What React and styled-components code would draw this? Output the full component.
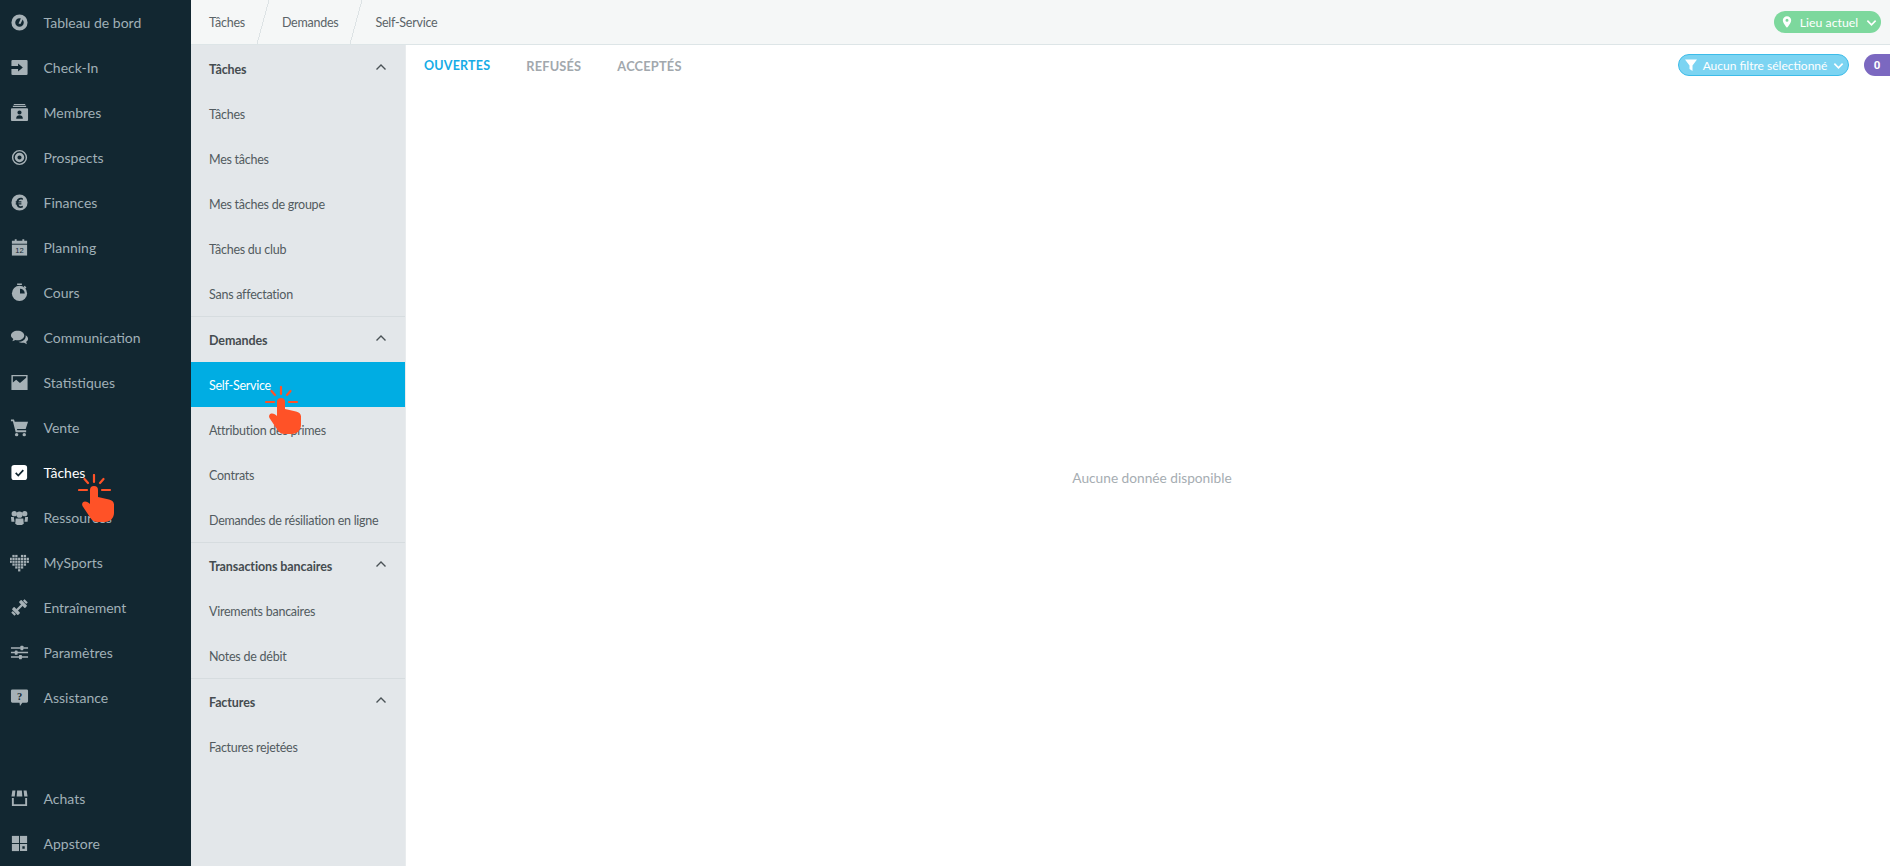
import React from 'react';
import styled, { createGlobalStyle } from 'styled-components';

const Global = createGlobalStyle`
  html, body { margin: 0; padding: 0; height: 100%; background: #fff; overflow: hidden; }
  #root { height: 100%; }
  * { box-sizing: border-box; }
`;

const Page = styled.div`
  display: flex; width: 1890px; height: 866px; position: relative; overflow: hidden;
  font-family: Lato, "Noto Sans", sans-serif; font-size: 14px;
`;
const Nav = styled.nav`
  width: 191px; flex: none; background: #122731; display: flex; flex-direction: column;
`;
const NavSpacer = styled.div`flex: 1;`;
const NavItem = styled.div`
  height: 45px; flex: none; display: flex; align-items: center; gap: 14.500px; padding-left: 10px;
  color: ${p => (p.$active ? '#ffffff' : '#a0b0b7')}; font-size: 14px;
  svg { width: 19px; height: 19px; flex: none; }
`;
const Main = styled.div`flex: 1; display: flex; flex-direction: column; min-width: 0;`;
const TopBar = styled.header`
  height: 45px; flex: none; background: #f5f7f7; border-bottom: 1px solid #dde5e7;
  display: flex; align-items: center; justify-content: space-between; padding: 0 9px 0 0;
`;
const Crumbs = styled.div`display: flex; align-items: center; height: 100%;`;
const Crumb = styled.div`
  height: 100%; display: flex; align-items: center; padding: 0 18px 0 19px; color: #5b6468; font-size: 12.500px; letter-spacing: -.25px;
  position: relative;
  &:first-child { padding-left: 18px; }
  &:not(:last-child)::after {
    content: ''; position: absolute; right: -6px; top: 0; bottom: 0; width: 12px;
    background: linear-gradient(to bottom right, transparent calc(50% - .5px), #dde3e5 calc(50% - .5px), #dde3e5 calc(50% + .5px), transparent calc(50% + .5px));
  }
`;
const LocationPill = styled.div`
  height: 22px; width: 107px; border-radius: 11px; background: #7dd89d; color: #fff; font-size: 12.300px;
  display: flex; align-items: center; justify-content: center; gap: 8px; padding-left: 4px;
`;
const Body = styled.div`flex: 1; display: flex; min-height: 0;`;
const Side = styled.aside`
  width: 215px; flex: none; background: #e3e7ea; border-right: 1px solid #e9ecee; display: flex; flex-direction: column;
  padding-top: 1px;
`;
const Section = styled.section`
  border-bottom: ${p => (p.$last ? 'none' : '1px solid #d6dcdf')};
`;
const SectionHead = styled.div`
  height: 45px; display: flex; align-items: center; justify-content: space-between; padding: 1px 18px 0 18px;
  color: #454c50; font-size: 12.500px; font-weight: 700; letter-spacing: -.1px;
  svg { width: 12px; height: 12px; margin-top: -4px; }
`;
const SideItem = styled.div`
  height: 45px; display: flex; align-items: center; padding: 1px 0 0 18px; font-size: 12.500px; letter-spacing: -.25px;
  color: ${p => (p.$active ? '#ffffff' : '#525b60')};
  background: ${p => (p.$active ? '#00ade3' : 'transparent')};
`;
const Content = styled.main`flex: 1; display: flex; flex-direction: column; min-width: 0;`;
const TabRow = styled.div`
  height: 42px; flex: none; display: flex; align-items: center; justify-content: space-between; padding: 0 0 0 18px;
`;
const Tabs = styled.div`display: flex; gap: 36px;`;
const Tab = styled.div`
  font-size: ${p => (p.$active ? '12.500px' : '12.800px')}; font-weight: 700; letter-spacing: .2px; color: ${p => (p.$active ? '#16ace6' : '#a2a8ad')};
`;
const Filters = styled.div`display: flex; align-items: center; gap: 15px; padding-bottom: 2px;`;
const FilterPill = styled.div`
  height: 22px; width: 171px; border-radius: 11px; background: #7cd4f2; border: 1px solid #3dbce9; color: #fff; font-size: 12px;
  display: flex; align-items: center; justify-content: center; gap: 6px; padding-left: 2px;
`;
const CountBadge = styled.div`
  width: 26px; height: 22px; border-radius: 11px 0 0 11px; background: #7b68c0; color: #fff; font-size: 11.500px; font-weight: 700;
  font-family: Roboto, sans-serif; display: flex; align-items: center; justify-content: center;
`;
const Empty = styled.div`
  flex: 1; display: flex; align-items: center; justify-content: center; color: #a6adb2; font-size: 13.700px; padding: 2px 0 0 8px;
`;
const HandWrap = styled.div`
  position: absolute; left: ${p => p.$x}px; top: ${p => p.$y}px; width: 40px; height: 50px;
`;

const ic = '#a6b1b6';
const bg = '#122731';
const Svg = ({ children, ...r }) => <svg viewBox="0 0 20 20" fill={ic} {...r}>{children}</svg>;

const icons = {
  dash: <Svg><path fillRule="evenodd" d="M10 1.500a8.500 8.500 0 100 17 8.500 8.500 0 000-17zm0 4a4.500 4.500 0 100 9 4.500 4.500 0 000-9z"/><path d="M9 11l3-6.500 2 1-3 6z"/></Svg>,
  checkin: <Svg><rect x="1.500" y="2" width="17" height="16" rx="1.200"/><path fill={bg} d="M1 8.500h7.500V5.800l5 4.200-5 4.200v-2.700H1z"/></Svg>,
  members: <Svg><path d="M4 1h12v1H4zM3 3h14v1.200H3z"/><path fillRule="evenodd" d="M2 5.500h16a1 1 0 011 1V18a1 1 0 01-1 1H2a1 1 0 01-1-1V6.500a1 1 0 011-1zM10 7.800a2.200 2.200 0 100 4.400 2.200 2.200 0 000-4.400zm-3.500 8.700h7c0-2.500-1.500-3.500-3.500-3.500s-3.500 1-3.500 3.500z"/></Svg>,
  prospects: <Svg><path fillRule="evenodd" d="M10 2a8 8 0 100 16 8 8 0 000-16zm0 1.500a6.500 6.500 0 110 13 6.500 6.500 0 010-13z"/><path fillRule="evenodd" d="M10 5a5 5 0 100 10 5 5 0 000-10zm0 2.800a2.200 2.200 0 110 4.400 2.200 2.200 0 010-4.400z"/></Svg>,
  finances: <Svg><path fillRule="evenodd" d="M10 1.500a8.500 8.500 0 100 17 8.500 8.500 0 000-17zM13.500 5.500v1.800c-2-1-4-.5-4.500 1.500h3v1.200H8.800v.8H12V12H9c.6 2 2.500 2.500 4.500 1.500v1.800c-3 1.200-6 0-6.700-3.300H6v-1.200h.6v-.8H6V8.800h.8C7.500 5.500 10.500 4.300 13.500 5.500z"/></Svg>,
  planning: <Svg><path d="M2 3h3V1.200h2V3h6V1.200h2V3h3v3H2z"/><rect x="2" y="7" width="16" height="11.500"/><text x="10" y="16.300" fontSize="8" textAnchor="middle" fill={bg} fontFamily="Liberation Sans">12</text></Svg>,
  cours: <Svg><path d="M7.500.5h5V2h-5zM15.500 3l1.800 1.800-1.200 1.200-1.800-1.800z"/><circle cx="10" cy="11" r="8"/><path fill={bg} d="M10.500 6v5H15.500a5 5 0 00-5-5z"/></Svg>,
  comm: <Svg><path d="M8 3c4 0 7 2.200 7 5s-3 5-7 5c-.8 0-1.500-.1-2.200-.3L2.500 14l1-2.500C2 10.500 1 9.300 1 8c0-2.800 3-5 7-5z"/><path d="M16.500 7.500c1.500.9 2.500 2.200 2.500 3.700 0 1.300-.8 2.500-2 3.300l.8 2.500-3-1.500c-2 .4-4.500 0-5.800-1 3.700 0 8-2 7.500-7z"/></Svg>,
  stats: <Svg><path fillRule="evenodd" d="M1.500 2h17v16h-17zM3 3.500V10l3.500-3 4 3.500 6.500-5.500V3.500z"/></Svg>,
  cart: <Svg><path d="M1 1.500h3.200l.8 2.500H19l-2.500 7.500H7.300l.4 1.500H17v2H6L3 3.500H1z"/><circle cx="7" cy="17.500" r="1.800"/><circle cx="15" cy="17.500" r="1.800"/></Svg>,
  tasks: <svg viewBox="0 0 20 20"><rect x="1.500" y="2" width="16.500" height="16" rx="3" fill="#fff"/><path d="M6 10.500l2.700 2.700L14 7.500" fill="none" stroke={bg} strokeWidth="1.800"/></svg>,
  res: <Svg><circle cx="4.500" cy="6" r="2.800"/><circle cx="15.500" cy="6" r="2.800"/><circle cx="10" cy="7" r="3.300"/><path d="M1 9.500h3l.8 5H1.500zM19 9.500h-3l-.8 5h3.300zM6 11h8l.5 5.500-2 1.500h-5l-2-1.500z"/></Svg>,
  mysports: <Svg><g>{[[3,3],[6,3],[12,3],[15,3],[0,6],[3,6],[6,6],[9,6],[12,6],[15,6],[18,6],[0,9],[3,9],[6,9],[9,9],[12,9],[15,9],[18,9],[3,12],[6,12],[9,12],[12,12],[15,12],[6,15],[9,15],[12,15],[9,18]].map(([x, y], i) => <rect key={i} x={x - .5} y={y - 1} width="2.400" height="2.400"/>)}</g></Svg>,
  gym: <Svg><g transform="rotate(-45 10 10)"><rect x="5.500" y="8.800" width="9" height="2.400"/><rect x="3" y="5.500" width="3.500" height="9" rx=".8"/><rect x="13.500" y="5.500" width="3.500" height="9" rx=".8"/><rect x="0" y="7.500" width="2.500" height="5" rx=".8"/><rect x="17.500" y="7.500" width="2.500" height="5" rx=".8"/></g></Svg>,
  params: <Svg><path d="M1 4.500h18v1.500H1zM1 9.300h18v1.500H1zM1 14h18v1.500H1z"/><rect x="11" y="3" width="3" height="4.500" rx=".5"/><rect x="5" y="7.800" width="3" height="4.500" rx=".5"/><rect x="9.500" y="12.500" width="3" height="4.500" rx=".5"/></Svg>,
  help: <Svg><path d="M2.500 1.500h15A1.500 1.500 0 0119 3v11a1.500 1.500 0 01-1.500 1.500H13L10.500 19l-.5-3.500H2.500A1.500 1.500 0 011 14V3a1.500 1.500 0 011.500-1.500z"/><text x="10" y="12.500" fontSize="11" textAnchor="middle" fill={bg} fontFamily="Liberation Serif" fontWeight="700">?</text></Svg>,
  shop: <Svg><path d="M2.500 1.500h3.200L5 8H1.500zM7.500 1.500h5L13 8H7zM14.300 1.500h3.200l1 6.500H15z"/><path d="M2 9.500h2v6.500h12V9.500h2V18H2z"/></Svg>,
  apps: <Svg><rect x="2" y="2" width="7.500" height="7.500"/><rect x="10.500" y="2" width="7.500" height="7.500"/><rect x="2" y="10.500" width="7.500" height="7.500"/><path fillRule="evenodd" d="M10.500 10.500H18V18h-7.500zm2.500 2.500v2.500h2.500V13z"/></Svg>,
};

const Chevron = ({ color = '#4a5256', size = 12 }) => (
  <svg viewBox="0 0 12 12" width={size} height={size} fill="none" stroke={color} strokeWidth="1.400"><path d="M1.500 8.500L6 4l4.500 4.500"/></svg>
);
const ChevronDown = () => (
  <svg viewBox="0 0 12 12" width="11" height="11" fill="none" stroke="#fff" strokeWidth="1.800"><path d="M1.500 4L6 8.500 10.500 4"/></svg>
);
const Pin = () => (
  <svg viewBox="0 0 12 14" width="10" height="12" fill="#fff"><path fillRule="evenodd" d="M6 0a5 5 0 00-5 5c0 3.500 5 9 5 9s5-5.500 5-9a5 5 0 00-5-5zm0 3.200a1.800 1.800 0 110 3.600 1.800 1.800 0 010-3.600z"/></svg>
);
const Funnel = () => (
  <svg viewBox="0 0 12 12" width="12" height="12" fill="#fff"><path d="M0 .5h12L7.500 6.500V12l-3-2V6.500z"/></svg>
);
const Hand = () => (
  <svg viewBox="0 0 40 50" width="40" height="50">
    <g stroke="#ff5227" strokeWidth="2.200" strokeLinecap="round">
      <path d="M16 1v7M6.500 5l3.500 4M25.500 5L22 9M1 16h8M24 16h8"/>
    </g>
    <path fill="#ff5227" d="M12 16a4 4 0 018 0v7l11 2.500c3 .7 5 2.500 5 5V39c0 5-4 9-9 9h-7c-3.500 0-6-1.500-7.500-4L4.500 32c-1.200-2.500.5-4.500 2.500-4.500 2 0 3.500 1 5 2.500z"/>
  </svg>
);

const top = [
  ['dash', 'Tableau de bord'], ['checkin', 'Check-In'], ['members', 'Membres'], ['prospects', 'Prospects'],
  ['finances', 'Finances'], ['planning', 'Planning'], ['cours', 'Cours'], ['comm', 'Communication'],
  ['stats', 'Statistiques'], ['cart', 'Vente'], ['tasks', 'Tâches', true], ['res', 'Ressources'],
  ['mysports', 'MySports'], ['gym', 'Entraînement'], ['params', 'Paramètres'], ['help', 'Assistance'],
];
const sections = [
  { t: 'Tâches', items: ['Tâches', 'Mes tâches', 'Mes tâches de groupe', 'Tâches du club', 'Sans affectation'] },
  { t: 'Demandes', items: ['Self-Service', 'Attribution des primes', 'Contrats', 'Demandes de résiliation en ligne'] },
  { t: 'Transactions bancaires', items: ['Virements bancaires', 'Notes de débit'] },
  { t: 'Factures', items: ['Factures rejetées'], last: true },
];

export default function App() {
  return (
    <Page>
      <Global />
      <Nav>
        {top.map(([k, l, a]) => <NavItem key={l} $active={a}>{icons[k]}<span>{l}</span></NavItem>)}
        <NavSpacer />
        <NavItem>{icons.shop}<span>Achats</span></NavItem>
        <NavItem>{icons.apps}<span>Appstore</span></NavItem>
      </Nav>
      <Main>
        <TopBar>
          <Crumbs>
            <Crumb>Tâches</Crumb><Crumb>Demandes</Crumb><Crumb>Self-Service</Crumb>
          </Crumbs>
          <LocationPill><Pin />Lieu actuel<ChevronDown /></LocationPill>
        </TopBar>
        <Body>
          <Side>
            {sections.map(s => (
              <Section key={s.t} $last={s.last}>
                <SectionHead>{s.t}<Chevron /></SectionHead>
                {s.items.map(i => <SideItem key={i} $active={i === 'Self-Service'}>{i}</SideItem>)}
              </Section>
            ))}
          </Side>
          <Content>
            <TabRow>
              <Tabs><Tab $active>OUVERTES</Tab><Tab>REFUSÉS</Tab><Tab>ACCEPTÉS</Tab></Tabs>
              <Filters>
                <FilterPill><Funnel />Aucun filtre sélectionné<ChevronDown /></FilterPill>
                <CountBadge>0</CountBadge>
              </Filters>
            </TabRow>
            <Empty>Aucune donnée disponible</Empty>
          </Content>
        </Body>
      </Main>
      <HandWrap $x={78} $y={474}><Hand /></HandWrap>
      <HandWrap $x={265} $y={386}><Hand /></HandWrap>
    </Page>
  );
}
